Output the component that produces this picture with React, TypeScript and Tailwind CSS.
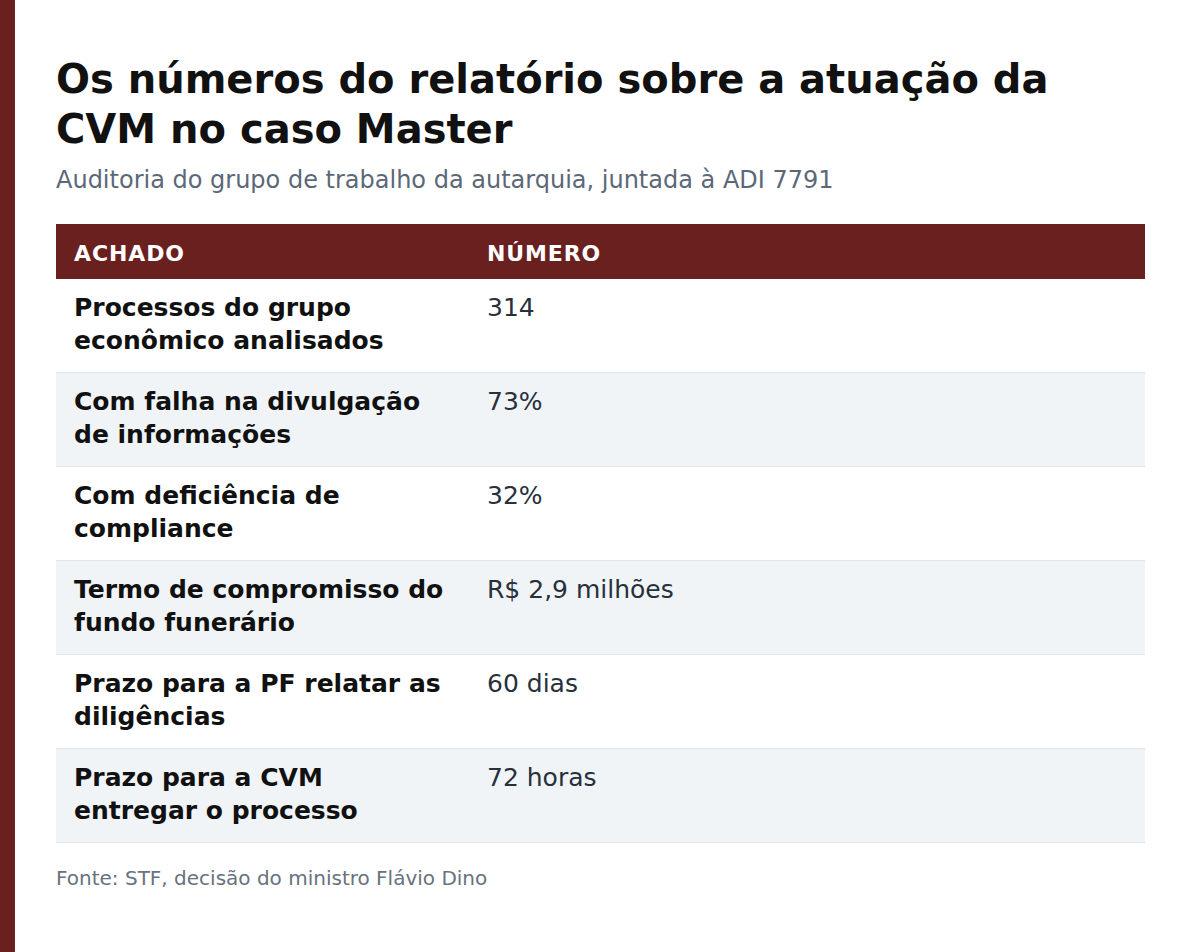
import React from "react";

const rows = [
  { label: "Processos do grupo econômico analisados", value: "314" },
  { label: "Com falha na divulgação de informações", value: "73%" },
  { label: "Com deficiência de compliance", value: "32%" },
  { label: "Termo de compromisso do fundo funerário", value: "R$ 2,9 milhões" },
  { label: "Prazo para a PF relatar as diligências", value: "60 dias" },
  { label: "Prazo para a CVM entregar o processo", value: "72 horas" },
];

const App = () => {
  return (
    <div
      className="flex min-h-[952px] bg-white"
      style={{ fontFamily: '"DejaVu Sans", sans-serif' }}
    >
      <div className="w-[15px] shrink-0 bg-[#6b2020]" />
      <div className="flex-1 pl-[41px] pr-[55px] pt-[54px]">
        <h1 className="text-[40px] font-bold leading-[50px] text-[#111111]">
          Os números do relatório sobre a atuação da CVM no caso Master
        </h1>
        <p className="mt-[10px] text-[24px] leading-[32px] text-[#5b6877]">
          Auditoria do grupo de trabalho da autarquia, juntada à ADI 7791
        </p>

        <div className="mt-[28px]">
          <div className="grid h-[55px] grid-cols-[413px_1fr] items-center bg-[#6b2020] pt-[3px] text-[22px] font-bold uppercase leading-[33px] tracking-[0.04em] text-white">
            <div className="px-[18px]">Achado</div>
            <div className="px-[18px]">Número</div>
          </div>
          {rows.map((row, i) => (
            <div
              key={row.label}
              className={`grid grid-cols-[413px_1fr] border-b border-[#dfe5eb] pt-[12px] pb-[15px] ${
                i % 2 === 1 ? "bg-[#f0f4f7]" : "bg-white"
              }`}
            >
              <div className="px-[18px] text-[25px] font-bold leading-[33px] text-[#111111]">
                {row.label}
              </div>
              <div className="px-[18px] text-[25px] leading-[33px] text-[#27303b]">
                {row.value}
              </div>
            </div>
          ))}
        </div>

        <p className="mt-[21px] text-[20px] leading-[28px] text-[#67727e]">
          Fonte: STF, decisão do ministro Flávio Dino
        </p>
      </div>
    </div>
  );
};

export default App;
